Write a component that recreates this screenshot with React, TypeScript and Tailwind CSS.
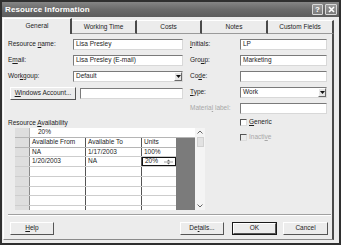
import React from 'react'

const font = "font-['Liberation_Sans',Arial,sans-serif]"

function Field({ value, dropdown, className = '' }: { value?: string; dropdown?: boolean; className?: string }) {
  return (
    <div
      className={`h-[11px] bg-white border border-t-[#7a7a7a] border-l-[#7a7a7a] border-b-[#d8d8d8] border-r-[#d8d8d8] flex items-center ${className}`}
    >
      <span className="pl-[2px] flex-1 truncate">{value}</span>
      {dropdown && (
        <div className="w-[8px] h-[9px] bg-[#e6e6e6] border border-t-white border-l-white border-b-[#6a6a6a] border-r-[#6a6a6a] flex items-center justify-center">
          <svg width="5" height="3" viewBox="0 0 5 3">
            <path d="M0 0h5L2.5 3z" fill="#111" />
          </svg>
        </div>
      )}
    </div>
  )
}

function Btn({ children, className = '', def }: { children: React.ReactNode; className?: string; def?: boolean }) {
  return (
    <div className={`h-[13px] ${def ? 'border border-[#1a1a1a]' : ''} ${className}`}>
      <div className="h-full bg-[#ececec] border border-t-white border-l-white border-b-[#555] border-r-[#555] flex items-center justify-center">
        {children}
      </div>
    </div>
  )
}

function Check({ label, disabled }: { label: React.ReactNode; disabled?: boolean }) {
  return (
    <div className="flex items-center gap-[2px] h-[8px]">
      <div
        className={`w-[7px] h-[7px] border border-t-[#555] border-l-[#555] border-b-[#ddd] border-r-[#ddd] ${disabled ? 'bg-[#ececec]' : 'bg-white'}`}
      />
      <span className={disabled ? 'text-[#a8a8a8]' : ''}>{label}</span>
    </div>
  )
}

const rows = [
  { h: 'h-[9px]', from: 'NA', to: '1/17/2003', units: '100%' },
  { h: 'h-[10px]', from: '1/20/2003', to: 'NA', units: '20%', active: true },
  { h: 'h-[10px]' },
  { h: 'h-[10px]' },
  { h: 'h-[9px]' },
  { h: 'h-[10px]' },
  { h: 'h-[4px]' },
] as { h: string; from?: string; to?: string; units?: string; active?: boolean }[]

function Table() {
  return (
    <div className="ml-[7px] w-[190px] h-[82px] flex bg-white">
      <div className="w-[180px] flex flex-col">
        {/* entry bar */}
        <div className="h-[10px] flex border-b border-[#b5b5b5]">
          <div className="w-[15px] bg-[#dedede] border-r border-[#b5b5b5]" />
          <div className="flex-1 flex items-center pl-[8px]">20%</div>
        </div>
        <div className="flex-1 flex">
          <div className="w-[161px] flex flex-col">
            <div className="h-[10px] flex border-b border-[#b5b5b5]">
              <div className="w-[15px] bg-[#dedede] border-r border-[#8a8a8a]" />
              <div className="w-[56px] flex items-center pl-[2px] border-r border-[#555]">Available From</div>
              <div className="w-[56px] flex items-center pl-[2px] border-r border-[#555]">Available To</div>
              <div className="flex-1 flex items-center pl-[2px]">Units</div>
            </div>
            {rows.map((r, i) => (
              <div key={i} className={`${r.h} flex border-b border-[#cdcdcd] last:border-b-0`}>
                <div className="w-[15px] bg-[#dedede] border-r border-[#8a8a8a]" />
                <div className="w-[56px] flex items-center pl-[2px] border-r border-[#555]">{r.from}</div>
                <div className="w-[56px] flex items-center pl-[2px] border-r border-[#555]">{r.to}</div>
                {r.active ? (
                  <div className="flex-1 flex items-center pl-[2px] pr-[2px] border-[1.5px] border-[#111]">
                    <span className="flex-1">{r.units}</span>
                    <svg width="9" height="6" viewBox="0 0 9 6">
                      <path d="M0 3h9" stroke="#888" strokeWidth="0.8" />
                      <path d="M3 2.2L4.5 0.6L6 2.2z" fill="#666" />
                      <path d="M3 3.8L4.5 5.4L6 3.8z" fill="#666" />
                    </svg>
                  </div>
                ) : (
                  <div className="flex-1 flex items-center pl-[2px]">{r.units}</div>
                )}
              </div>
            ))}
          </div>
          <div className="flex-1 bg-[#7b7b7b]" />
        </div>
      </div>
      <div className="w-[10px] bg-[#f4f4f4] flex flex-col items-center justify-between py-[2px]">
        <div className="flex flex-col items-center gap-[3px]">
          <svg width="6" height="4" viewBox="0 0 6 4">
            <path d="M0.5 3.5L3 1L5.5 3.5" stroke="#666" strokeWidth="1" fill="none" />
          </svg>
          <div className="w-[7px] h-[10px] bg-[#e2e2e2] border border-[#d0d0d0]" />
        </div>
        <svg width="6" height="4" viewBox="0 0 6 4">
          <path d="M0.5 0.5L3 3L5.5 0.5" stroke="#666" strokeWidth="1" fill="none" />
        </svg>
      </div>
    </div>
  )
}

export default function App() {
  const tabs = [
    { label: 'General', w: 'w-[69px]' },
    { label: 'Working Time', w: 'w-[65px]' },
    { label: 'Costs', w: 'w-[65px]' },
    { label: 'Notes', w: 'w-[66px]' },
    { label: 'Custom Fields', w: 'w-[66px]' },
  ]
  return (
    <div className={`w-[341px] h-[245px] bg-[#2f2f2f] p-[2px] flex flex-col ${font} text-[6.5px] leading-none text-[#1c1c1c]`}>
      {/* title bar */}
      <div className="h-[15px] bg-gradient-to-b from-[#858585] via-[#6a6a6a] to-[#5c5c5c] flex items-center pl-[3px] pr-[2px]">
        <span className="text-white font-bold text-[8px] tracking-[0.1px]">Resource Information</span>
        <div className="ml-auto flex gap-[2px]">
          <div className="w-[11px] h-[11px] rounded-[1px] border border-[#d8d8d8] bg-gradient-to-b from-[#9a9a9a] to-[#7a7a7a] flex items-center justify-center text-white font-bold text-[8px]">
            ?
          </div>
          <div className="w-[12px] h-[11px] rounded-[1px] border border-[#d8d8d8] bg-gradient-to-b from-[#9a9a9a] to-[#7a7a7a] flex items-center justify-center">
            <svg width="7" height="7" viewBox="0 0 7 7">
              <path d="M1 1L6 6M6 1L1 6" stroke="white" strokeWidth="1.6" />
            </svg>
          </div>
        </div>
      </div>

      <div className="flex-1 bg-[#ececec] flex flex-col pl-[1px]">
        {/* tabs */}
        <div className="h-[16px] mt-[1px] flex">
          {tabs.map((t, i) => (
            <div
              key={t.label}
              className={`${t.w} flex items-center justify-center border-r-2 border-r-[#4a4a4a] ${
                i === 0 ? 'bg-[#ececec] border-l border-l-white border-t border-t-white' : 'mt-[2px] border-b border-b-[#9a9a9a] border-t border-t-white'
              }`}
            >
              {t.label}
            </div>
          ))}
        </div>

        {/* panel */}
        <div className="w-[331px] h-[206px] border-l border-l-white border-r-2 border-r-[#4a4a4a] border-b border-b-[#8a8a8a] flex flex-col pl-[4px] pt-[5px]">
          <div className="flex">
            <div className="w-[175px] flex flex-col gap-[5px]">
              <div className="flex items-center">
                <span className="w-[65px]">
                  Resource <u>n</u>ame:
                </span>
                <Field value="Lisa Presley" className="flex-1" />
              </div>
              <div className="flex items-center">
                <span className="w-[65px]">
                  E<u>m</u>ail:
                </span>
                <Field value="Lisa Presley (E-mail)" className="flex-1" />
              </div>
              <div className="flex items-center">
                <span className="w-[65px]">
                  Wor<u>k</u>goup:
                </span>
                <Field value="Default" dropdown className="flex-1" />
              </div>
              <div className="flex items-center">
                <Btn className="ml-[2px] w-[66px]">
                  <span>
                    <u>W</u>indows Account...
                  </span>
                </Btn>
                <Field className="ml-[4px] flex-1" />
              </div>
            </div>
            <div className="ml-[7px] w-[137px] flex flex-col gap-[5px]">
              <div className="flex items-center">
                <span className="w-[50px]">
                  <u>I</u>nitials:
                </span>
                <Field value="LP" className="flex-1" />
              </div>
              <div className="flex items-center">
                <span className="w-[50px]">
                  Gro<u>u</u>p:
                </span>
                <Field value="Marketing" className="flex-1" />
              </div>
              <div className="flex items-center">
                <span className="w-[50px]">
                  Co<u>d</u>e:
                </span>
                <Field className="flex-1" />
              </div>
              <div className="flex items-center">
                <span className="w-[50px]">
                  <u>T</u>ype:
                </span>
                <Field value="Work" dropdown className="flex-1" />
              </div>
              <div className="flex items-center">
                <span className="w-[50px] text-[#a8a8a8]">
                  Materia<u>l</u> label:
                </span>
                <Field className="flex-1" />
              </div>
            </div>
          </div>

          <div className="flex">
            <div className="w-[197px] flex flex-col">
              <div className="h-[8px] mt-[5px] mb-[1px] flex items-center">
                <span>
                  Resource <u>A</u>vailability
                </span>
              </div>
              <Table />
            </div>
            <div className="ml-[35px] pt-[4px] flex flex-col gap-[7px]">
              <Check
                label={
                  <>
                    <u>G</u>eneric
                  </>
                }
              />
              <Check
                disabled
                label={
                  <>
                    Inacti<u>v</u>e
                  </>
                }
              />
            </div>
          </div>

          <div className="mt-[4px] mr-[1px] h-[2px] border-t border-t-[#a0a0a0] border-b border-b-white" />

          <div className="mt-[6px] flex">
            <Btn className="ml-[2px] w-[44px]">
              <span>
                <u>H</u>elp
              </span>
            </Btn>
            <Btn className="ml-[126px] w-[44px]">
              <span>
                De<u>t</u>ails...
              </span>
            </Btn>
            <Btn def className="ml-[8px] w-[45px]">
              <span>OK</span>
            </Btn>
            <Btn className="ml-[6px] w-[45px]">
              <span>Cancel</span>
            </Btn>
          </div>
        </div>
      </div>
    </div>
  )
}
